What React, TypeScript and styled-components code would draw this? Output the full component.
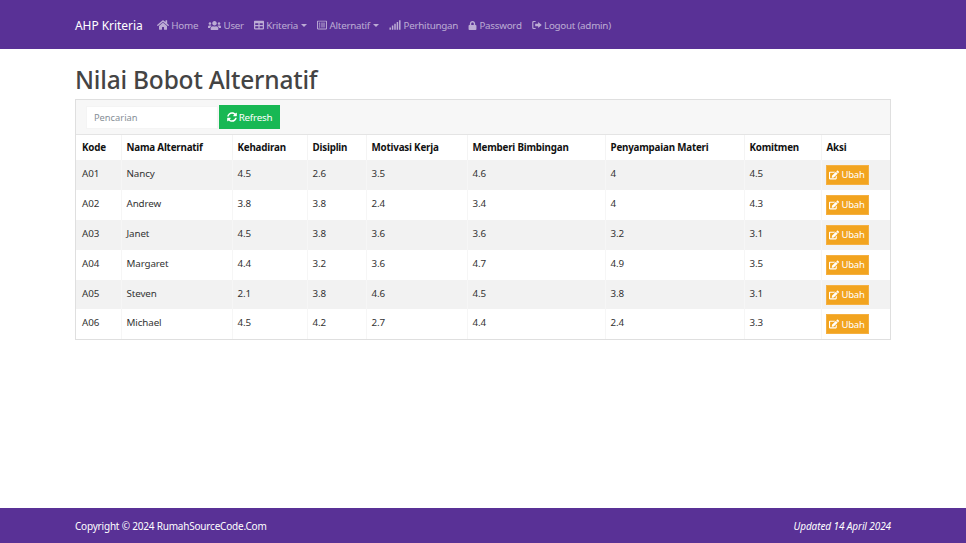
import React from "react";
import styled, { createGlobalStyle } from "styled-components";
import { FaHome, FaUsers, FaTable, FaRegListAlt, FaSignal, FaLock, FaSyncAlt, FaEdit } from "react-icons/fa";

const Global = createGlobalStyle`
  html, body { margin: 0; padding: 0; height: 100%; }
  body { font-family: "Noto Sans", "Open Sans", sans-serif; background: #fff; color: #212529; }
  #root { height: 100%; }
  * { box-sizing: border-box; }
`;

const Page = styled.div`
  height: 543px;
  display: flex;
  flex-direction: column;
  overflow: hidden;
`;
const Navbar = styled.nav`
  height: 49px;
  background: #593196;
  display: flex;
  align-items: center;
  padding: 1px 75px 0;
  flex: none;
`;
const Brand = styled.span`
  color: #fff;
  font-size: 12px;
  letter-spacing: -0.05px;
  margin-right: 15px;
  width: 67px;
  white-space: nowrap;
`;
const NavLinks = styled.div`
  display: flex;
  align-items: center;
  gap: 10px;
`;
const NavLink = styled.span`
  display: inline-flex;
  align-items: center;
  gap: 2.300px;
  color: rgba(255, 255, 255, 0.6);
  font-size: 9.8px;
  letter-spacing: -0.25px;
  white-space: nowrap;
  svg { flex: none; }
`;
const Caret = styled.i`
  display: inline-block;
  margin-left: 1px;
  border-top: 3px solid rgba(255, 255, 255, 0.6);
  border-left: 3px solid transparent;
  border-right: 3px solid transparent;
`;
const Main = styled.main`
  flex: 1;
  padding: 0 75px;
`;
const Title = styled.h1`
  margin: 0;
  height: 50px;
  padding-top: 14px;
  font-size: 24.5px;
  line-height: 34px;
  font-weight: 500;
  letter-spacing: -0.2px;
  color: #444;
`;
const Card = styled.section`
  width: 816px;
  border: 1px solid #dfdfdf;
`;
const Toolbar = styled.div`
  height: 35px;
  background: #f7f7f7;
  border-bottom: 1px solid #e4e4e4;
  display: flex;
  align-items: center;
  padding-left: 10px;
  gap: 1px;
`;
const Search = styled.input`
  width: 132px;
  height: 23px;
  border: 1px solid #f4f4f4;
  background: #fff;
  padding: 0 7px;
  font: 9.300px "Noto Sans", sans-serif;
  outline: none;
  &::placeholder { color: #868e96; opacity: 1; }
`;
const RefreshButton = styled.button`
  width: 61px;
  height: 24px;
  border: 1px solid #18b854;
  background: #18b854;
  color: #fff;
  display: inline-flex;
  align-items: center;
  justify-content: center;
  gap: 2px;
  padding: 0;
  font: 9.800px "Noto Sans", sans-serif;
  letter-spacing: -0.2px;
`;
const Table = styled.table`
  width: 814px;
  border-collapse: collapse;
  table-layout: fixed;
  font-size: 9.8px;
  letter-spacing: -0.1px;
`;
const Th = styled.th`
  height: 25px;
  padding: 0 5px;
  text-align: left;
  font-size: 9.8px;
  font-weight: 700;
  letter-spacing: -0.2px;
  color: #111;
  border-left: 1px solid #f4f4f4;
  &:first-child { border-left: 0; padding-left: 6px; }
`;
const Row = styled.tr<{ $odd: boolean }>`
  background: ${(p) => (p.$odd ? "#f2f2f2" : "#fff")};
`;
const Td = styled.td`
  height: 29.9px;
  padding: 0 5px 3px;
  color: #333;
  vertical-align: middle;
  border-left: 1px solid #f6f6f6;
  &:first-child { border-left: 0; padding-left: 6px; }
`;
const ActionCell = styled(Td)`
  padding: 0 4px 0;
`;
const EditButton = styled.button`
  display: flex;
  width: 43px;
  height: 20px;
  border: 1px solid #f5b041;
  background: #f2a41f;
  color: #fff;
  align-items: center;
  justify-content: center;
  gap: 2px;
  padding: 0;
  font: 9.500px "Noto Sans", sans-serif;
  letter-spacing: -0.2px;
`;
const Footer = styled.footer`
  height: 35px;
  flex: none;
  background: #593196;
  color: #fff;
  font-size: 10px;
  letter-spacing: -0.2px;
  display: flex;
  align-items: center;
  justify-content: space-between;
  padding: 0 75px;
`;
const Updated = styled.em`
  font-style: italic;
  letter-spacing: -0.1px;
`;

const LogoutIcon = () => (
  <svg width="10" height="10" viewBox="0 0 22 20" fill="currentColor" aria-hidden="true">
    <path d="M8 1H3.5A3 3 0 0 0 .5 4v12a3 3 0 0 0 3 3H8v-2.4H4a1 1 0 0 1-1-1V4.400a1 1 0 0 1 1-1h4z" />
    <path d="M7 7.500h6.500V3.500L21.500 10l-8 6.500v-4H7z" />
  </svg>
);

const columns = [45, 111, 75, 59, 101, 138, 139, 77, 69];
const headers = ["Kode", "Nama Alternatif", "Kehadiran", "Disiplin", "Motivasi Kerja", "Memberi Bimbingan", "Penyampaian Materi", "Komitmen", "Aksi"];
const rows = [
  ["A01", "Nancy", "4.5", "2.6", "3.5", "4.6", "4", "4.5"],
  ["A02", "Andrew", "3.8", "3.8", "2.4", "3.4", "4", "4.3"],
  ["A03", "Janet", "4.5", "3.8", "3.6", "3.6", "3.2", "3.1"],
  ["A04", "Margaret", "4.4", "3.2", "3.6", "4.7", "4.9", "3.5"],
  ["A05", "Steven", "2.1", "3.8", "4.6", "4.5", "3.8", "3.1"],
  ["A06", "Michael", "4.5", "4.2", "2.7", "4.4", "2.4", "3.3"],
];

export default function App() {
  return (
    <Page>
      <Global />
      <Navbar>
        <Brand>AHP Kriteria</Brand>
        <NavLinks>
          <NavLink><FaHome size={12} />Home</NavLink>
          <NavLink><FaUsers size={13} />User</NavLink>
          <NavLink><FaTable size={10} />Kriteria<Caret /></NavLink>
          <NavLink><FaRegListAlt size={10} />Alternatif<Caret /></NavLink>
          <NavLink><FaSignal size={12} />Perhitungan</NavLink>
          <NavLink><FaLock size={9} />Password</NavLink>
          <NavLink><LogoutIcon />Logout (admin)</NavLink>
        </NavLinks>
      </Navbar>
      <Main>
        <Title>Nilai Bobot Alternatif</Title>
        <Card>
          <Toolbar>
            <Search placeholder="Pencarian" />
            <RefreshButton type="button"><FaSyncAlt size={10} />Refresh</RefreshButton>
          </Toolbar>
          <Table>
            <colgroup>
              {columns.map((w, i) => <col key={i} width={w} />)}
            </colgroup>
            <thead>
              <tr>{headers.map((h) => <Th key={h}>{h}</Th>)}</tr>
            </thead>
            <tbody>
              {rows.map((r, i) => (
                <Row key={r[0]} $odd={i % 2 === 0}>
                  {r.map((c, j) => <Td key={j}>{c}</Td>)}
                  <ActionCell>
                    <EditButton type="button"><FaEdit size={10} />Ubah</EditButton>
                  </ActionCell>
                </Row>
              ))}
            </tbody>
          </Table>
        </Card>
      </Main>
      <Footer>
        <span>Copyright © 2024 RumahSourceCode.Com</span>
        <Updated>Updated 14 April 2024</Updated>
      </Footer>
    </Page>
  );
}
